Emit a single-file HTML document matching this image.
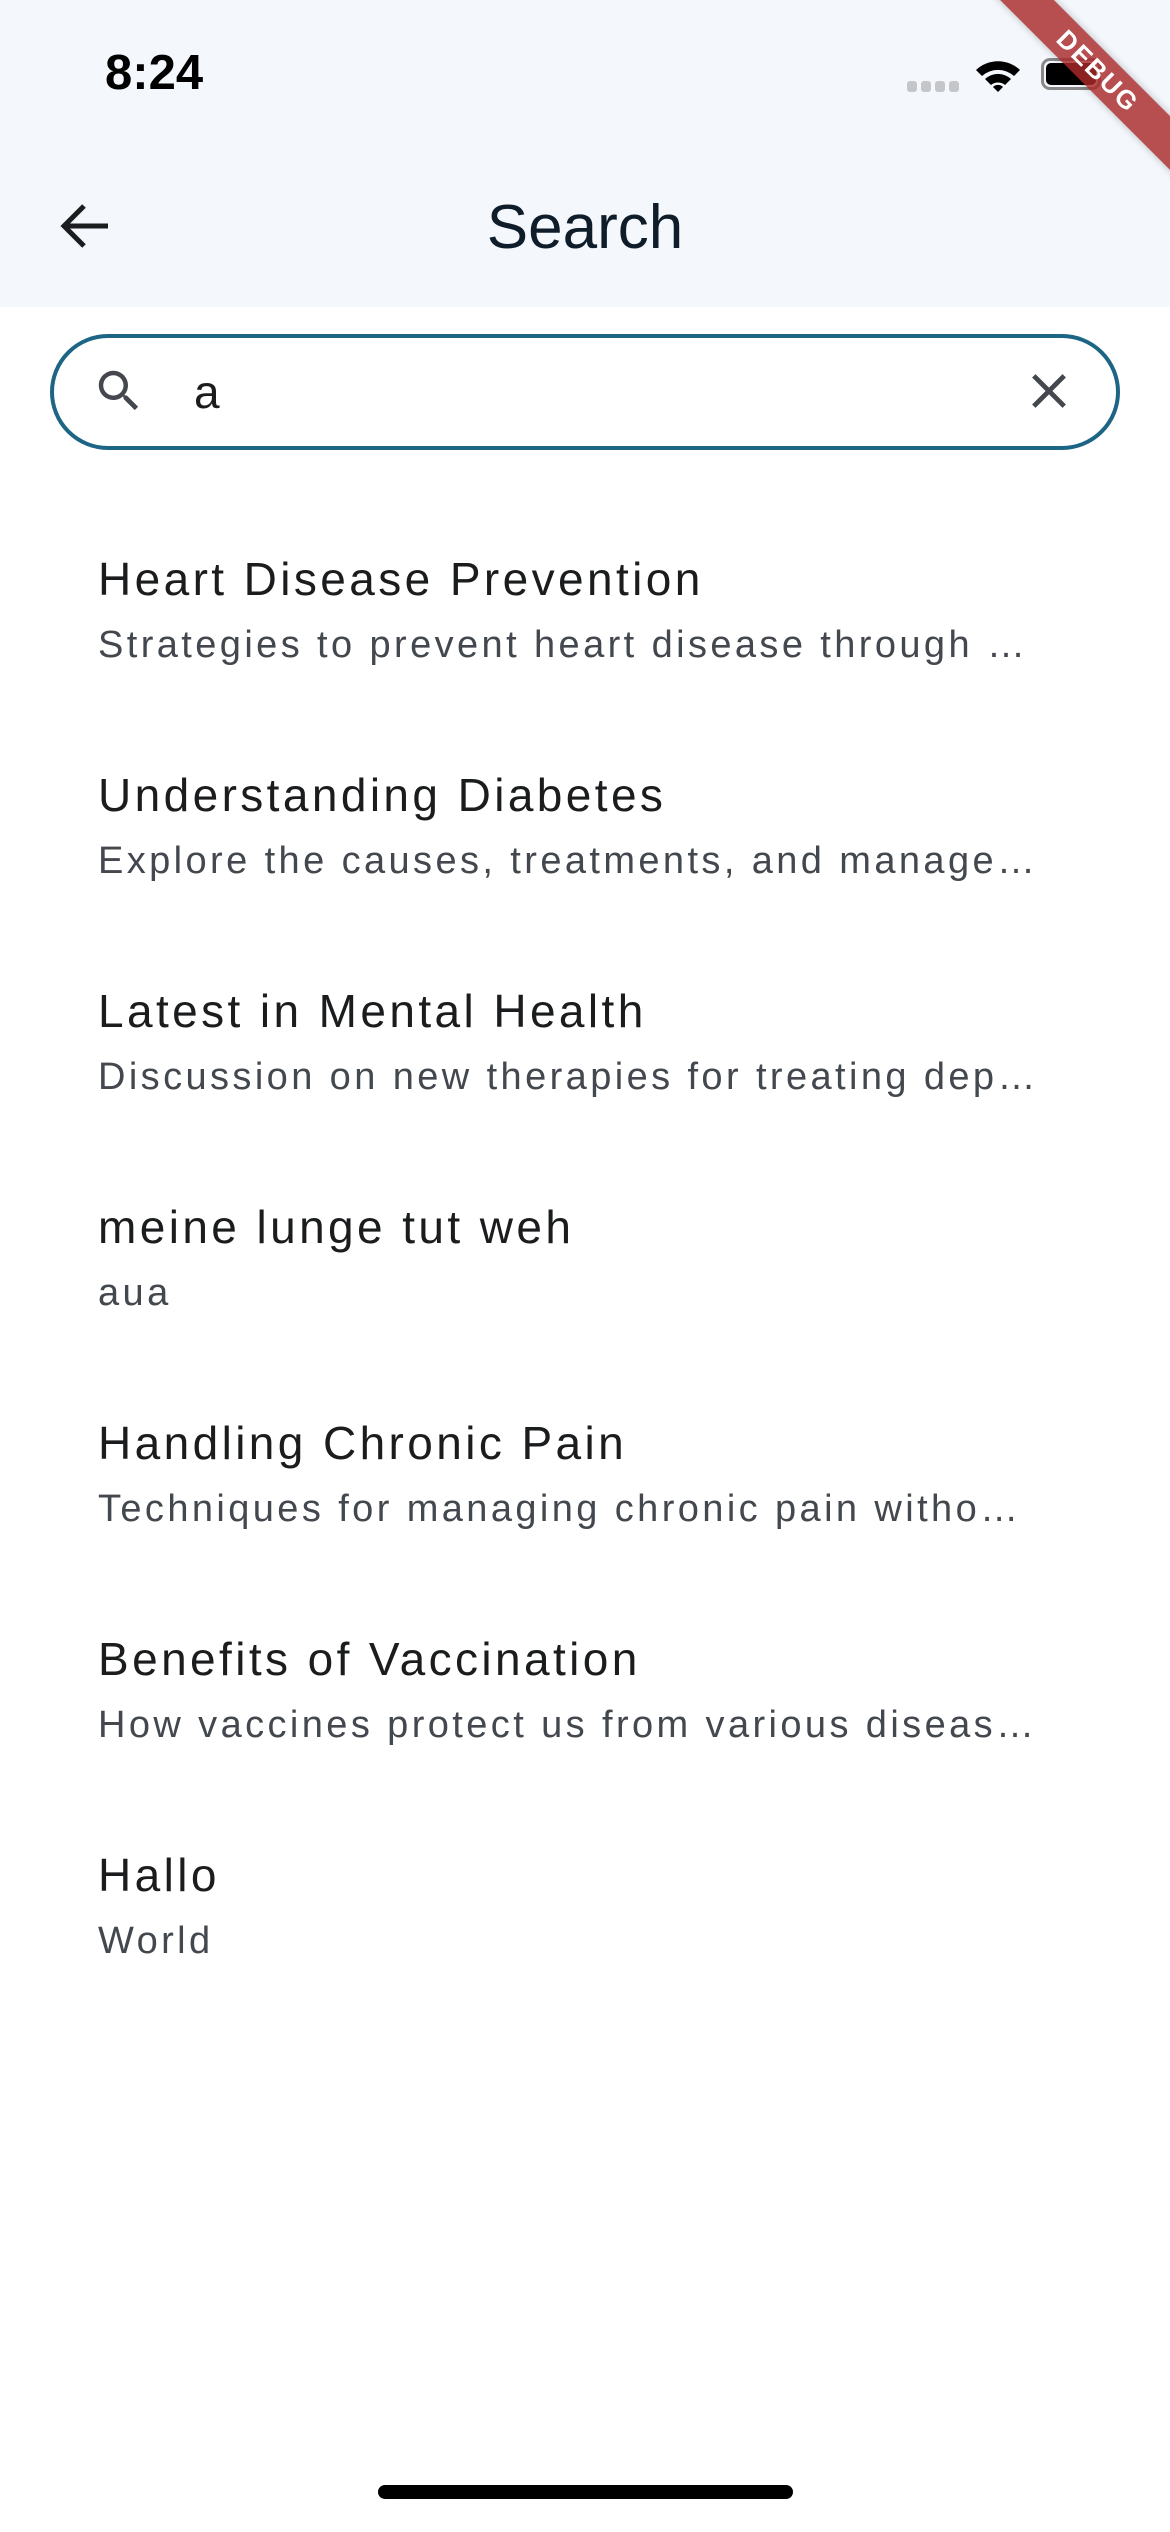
<!DOCTYPE html>
<html><head><meta charset="utf-8"><style>
html,body{margin:0;padding:0;}
body{width:1170px;height:2532px;position:relative;overflow:hidden;background:#fff;font-family:"Liberation Sans",sans-serif;}
.abs{position:absolute;}
.appbar{left:0;top:0;width:1170px;height:307px;background:#f4f7fc;}
.t{position:absolute;left:98px;font-size:46px;letter-spacing:3.4px;color:#1a1c1e;white-space:nowrap;line-height:60px;height:60px;}
.s{position:absolute;left:98px;font-size:38px;letter-spacing:3.4px;color:#43474e;white-space:nowrap;line-height:50px;height:50px;}
</style></head><body>
<div class="abs appbar"></div>
<div class="abs" style="left:105px;top:47px;font-size:49px;font-weight:bold;color:#000;line-height:52px;">8:24</div>
<div class="abs" style="left:907px;top:81px;width:10px;height:11px;border-radius:3px;background:#c4c6ca"></div>
<div class="abs" style="left:921px;top:81px;width:10px;height:11px;border-radius:3px;background:#c4c6ca"></div>
<div class="abs" style="left:935px;top:81px;width:10px;height:11px;border-radius:3px;background:#c4c6ca"></div>
<div class="abs" style="left:949px;top:81px;width:10px;height:11px;border-radius:3px;background:#c4c6ca"></div>
<svg class="abs" style="left:974px;top:54px" width="48" height="40" viewBox="0 0 48 40">
<path d="M2 16 A32 32 0 0 1 46 16 L40 22 A24 24 0 0 0 8 22 Z" fill="#000"/>
<path d="M11 25 A19 19 0 0 1 37 25 L31 31 A11 11 0 0 0 17 31 Z" fill="#000"/>
<path d="M19 33 A7 7 0 0 1 29 33 L24 38 Z" fill="#000"/>
</svg>
<div class="abs" style="left:1041px;top:58px;width:60px;height:32px;border:3px solid #888;border-radius:9px;box-sizing:border-box;"></div>
<div class="abs" style="left:1046px;top:63px;width:50px;height:22px;background:#000;border-radius:5px;"></div>
<div class="abs" style="left:948px;top:52px;width:300px;height:38px;background:rgba(170,40,40,0.82);transform:rotate(45deg);color:#fff;font-weight:bold;font-size:26px;letter-spacing:2px;text-align:center;line-height:38px;box-shadow:0 0 8px rgba(0,0,0,0.25);">DEBUG</div>
<svg class="abs" style="left:58px;top:202px" width="52" height="48" viewBox="0 0 52 48">
<path d="M50 24 H6 M26 4 L6 24 L26 44" stroke="#1a1c1e" stroke-width="5" fill="none"/>
</svg>
<div class="abs" style="left:0;width:1170px;top:188px;text-align:center;font-size:62px;color:#0f1d2a;line-height:80px;">Search</div>
<div class="abs" style="left:50px;top:334px;width:1070px;height:116px;border:4.5px solid #1d6585;border-radius:58px;box-sizing:border-box;"></div>
<svg class="abs" style="left:92px;top:364px" width="54" height="54" viewBox="0 0 24 24">
<path d="M15.5 14h-.79l-.28-.27A6.470 6.470 0 0 0 16 9.5 6.5 6.5 0 1 0 9.5 16c1.61 0 3.090-.59 4.230-1.570l.27.28v.79l5 4.990L20.490 19l-4.990-5zm-6 0C7.010 14 5 11.990 5 9.5S7.010 5 9.5 5 14 7.010 14 9.5 11.990 14 9.5 14z" fill="#44474e"/>
</svg>
<div class="abs" style="left:194px;top:364px;font-size:46px;color:#1a1c1e;line-height:56px;">a</div>
<svg class="abs" style="left:1020px;top:362px" width="58" height="58" viewBox="0 0 24 24">
<path d="M19 6.41 17.59 5 12 10.59 6.41 5 5 6.41 10.59 12 5 17.59 6.41 19 12 13.41 17.59 19 19 17.59 13.41 12z" fill="#44474e"/>
</svg>
<div class="t" style="top:549px">Heart Disease Prevention</div>
<div class="s" style="top:620px">Strategies to prevent heart disease through …</div>
<div class="t" style="top:765px">Understanding Diabetes</div>
<div class="s" style="top:836px">Explore the causes, treatments, and manage…</div>
<div class="t" style="top:981px">Latest in Mental Health</div>
<div class="s" style="top:1052px">Discussion on new therapies for treating dep…</div>
<div class="t" style="top:1197px">meine lunge tut weh</div>
<div class="s" style="top:1268px">aua</div>
<div class="t" style="top:1413px">Handling Chronic Pain</div>
<div class="s" style="top:1484px">Techniques for managing chronic pain witho…</div>
<div class="t" style="top:1629px">Benefits of Vaccination</div>
<div class="s" style="top:1700px">How vaccines protect us from various diseas…</div>
<div class="t" style="top:1845px">Hallo</div>
<div class="s" style="top:1916px">World</div>
<div class="abs" style="left:378px;top:2485px;width:415px;height:14px;border-radius:7px;background:#000;"></div>
</body></html>
